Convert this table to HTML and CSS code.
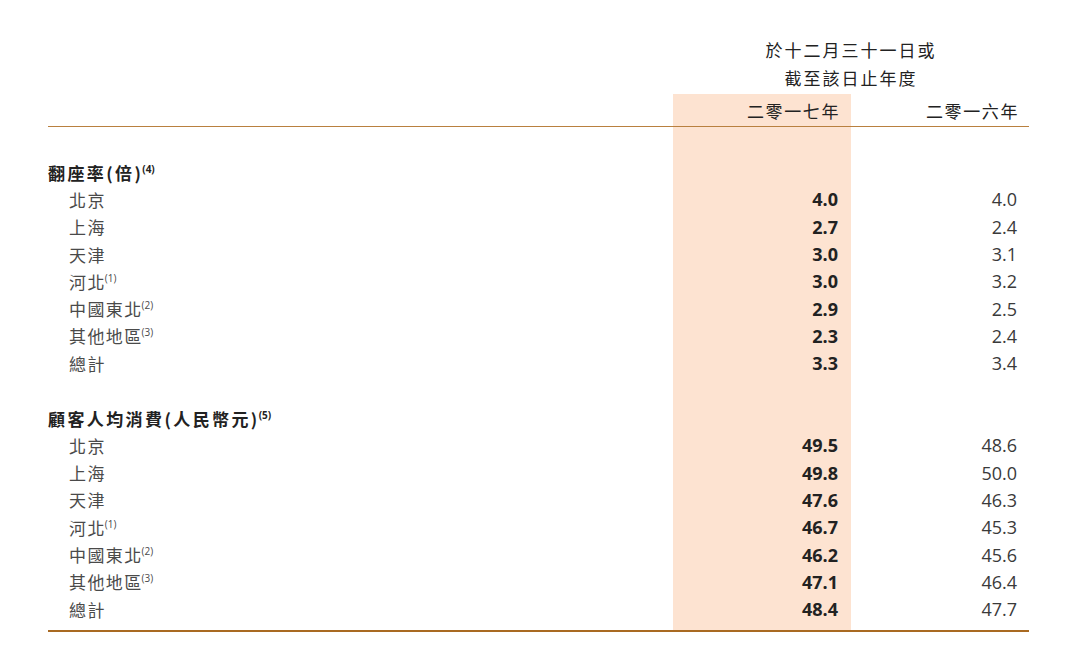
FILE: index.html
```html
<!DOCTYPE html>
<html lang="zh-Hant">
<head>
<meta charset="utf-8">
<link rel="stylesheet" href="styles.css">
</head>
<body>
<div class="page">
<table class="fin">
  <colgroup><col class="c-label"><col class="c-num"><col class="c-num"></colgroup>
  <thead>
    <tr class="period"><th></th><th colspan="2">於十二月三十一日或<br>截至該日止年度</th></tr>
    <tr class="years"><th></th><th class="cur">二零一七年</th><th class="prev">二零一六年</th></tr>
  </thead>
  <tbody>
    <tr class="gap-top"><td></td><td class="cur"></td><td></td></tr>
    <tr class="sect"><td>翻座率(倍)<sup>(4)</sup></td><td class="cur"></td><td></td></tr>
    <tr><td class="lbl">北京</td><td class="cur">4.0</td><td class="prev">4.0</td></tr>
    <tr><td class="lbl">上海</td><td class="cur">2.7</td><td class="prev">2.4</td></tr>
    <tr><td class="lbl">天津</td><td class="cur">3.0</td><td class="prev">3.1</td></tr>
    <tr><td class="lbl">河北<sup>(1)</sup></td><td class="cur">3.0</td><td class="prev">3.2</td></tr>
    <tr><td class="lbl">中國東北<sup>(2)</sup></td><td class="cur">2.9</td><td class="prev">2.5</td></tr>
    <tr><td class="lbl">其他地區<sup>(3)</sup></td><td class="cur">2.3</td><td class="prev">2.4</td></tr>
    <tr><td class="lbl">總計</td><td class="cur">3.3</td><td class="prev">3.4</td></tr>
    <tr class="gap"><td></td><td class="cur"></td><td></td></tr>
    <tr class="sect"><td>顧客人均消費(人民幣元)<sup>(5)</sup></td><td class="cur"></td><td></td></tr>
    <tr><td class="lbl">北京</td><td class="cur">49.5</td><td class="prev">48.6</td></tr>
    <tr><td class="lbl">上海</td><td class="cur">49.8</td><td class="prev">50.0</td></tr>
    <tr><td class="lbl">天津</td><td class="cur">47.6</td><td class="prev">46.3</td></tr>
    <tr><td class="lbl">河北<sup>(1)</sup></td><td class="cur">46.7</td><td class="prev">45.3</td></tr>
    <tr><td class="lbl">中國東北<sup>(2)</sup></td><td class="cur">46.2</td><td class="prev">45.6</td></tr>
    <tr><td class="lbl">其他地區<sup>(3)</sup></td><td class="cur">47.1</td><td class="prev">46.4</td></tr>
    <tr><td class="lbl">總計</td><td class="cur">48.4</td><td class="prev">47.7</td></tr>
    <tr class="gap-end"><td></td><td class="cur"></td><td></td></tr>
  </tbody>
</table>
</div>
</body>
</html>
```
FILE: styles.css
```css
html, body {
  margin: 0;
  padding: 0;
  background: #ffffff;
}
.page {
  padding: 36px 0 0 48px;
}
.fin {
  width: 981px;
  border-collapse: collapse;
  border-spacing: 0;
  table-layout: fixed;
  font-family: "Open Sans", "Noto Sans CJK TC", sans-serif;
  font-size: 18px;
  color: #3a3a3a;
}
.c-label { width: 625px; }
.c-num { width: 178px; }
.fin th, .fin td {
  padding: 0;
  vertical-align: middle;
  white-space: nowrap;
}
.period th {
  height: 58px;
  line-height: 28px;
  vertical-align: top;
  text-align: center;
  font-weight: normal;
  color: #222;
  letter-spacing: 2px;
  font-family: "Noto Sans CJK TC", sans-serif;
  font-size: 17px;
}
.years th {
  height: 32px;
  border-bottom: 1px solid #b9803f;
  font-weight: normal;
  font-family: "Noto Sans CJK TC", sans-serif;
  font-size: 17px;
  letter-spacing: 1.6px;
  color: #222;
  text-align: right;
}
.years th.cur { padding-right: 11px; }
.years th.prev { padding-right: 10px; }
.cur { background: #fde3d1; }
.fin tbody tr { height: 27.3px; }
.fin tbody tr.gap-top { height: 32px; }
.fin tbody tr.gap { height: 27.5px; }
.fin tbody tr.gap-end { height: 8px; }
.fin tbody tr.gap-end td { border-bottom: 2px solid #a96a22; }
.fin td.cur {
  text-align: right;
  padding-right: 13px;
  font-weight: bold;
  color: #222;
}
.fin td.prev {
  text-align: right;
  padding-right: 12px;
  color: #3a3a3a;
}
.sect td:first-child {
  font-family: "Noto Sans CJK TC", sans-serif;
  font-weight: bold;
  color: #222;
  font-size: 17px;
  letter-spacing: 2.4px;
}
td.lbl {
  padding-left: 21px;
  font-family: "Noto Sans CJK TC", sans-serif;
  font-size: 17px;
  letter-spacing: 1.4px;
  color: #4a4a4a;
}
sup {
  font-family: "Open Sans", sans-serif;
  font-size: 10px;
  letter-spacing: 0;
  vertical-align: 7px;
  line-height: 0;
  margin-left: -1px;
}
.sect sup { font-weight: bold; }
```
